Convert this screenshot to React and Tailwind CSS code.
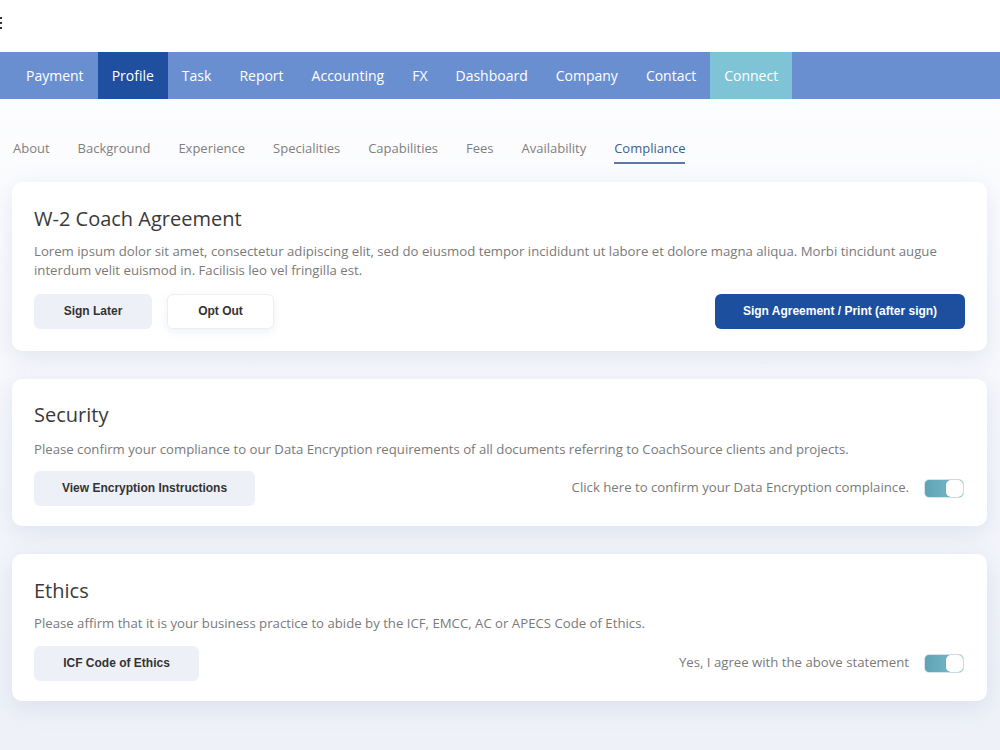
import React, { useState } from 'react';

const navItems = ['Payment', 'Profile', 'Task', 'Report', 'Accounting', 'FX', 'Dashboard', 'Company', 'Contact', 'Connect'];
const tabs = ['About', 'Background', 'Experience', 'Specialities', 'Capabilities', 'Fees', 'Availability', 'Compliance'];

const Toggle = ({ on, onClick }) => (
  <button
    onClick={onClick}
    className={`flex h-[19px] w-[40px] items-center rounded-[5px] border border-[#d9e2ea] p-0 ${on ? 'justify-end bg-gradient-to-r from-[#5fa3b5] to-[#7cc0cf]' : 'justify-start bg-[#e5e7eb]'}`}
  >
    <span className="h-[17px] w-[17px] rounded-[5px] bg-white shadow-[0_0_2px_rgba(0,0,0,0.15)]" />
  </button>
);

const Card = ({ children }) => (
  <div className="rounded-[10px] bg-white px-[22px] shadow-[0_6px_24px_rgba(120,140,190,0.18)]">
    {children}
  </div>
);

const GrayButton = ({ children, className = '' }) => (
  <button className={`h-[35px] rounded-[6px] bg-[#eef0f7] text-[12px] font-bold text-[#333] ${className}`} style={{ fontFamily: '"Liberation Sans", Arial, sans-serif' }}>
    {children}
  </button>
);

export default function App() {
  const [activeNav] = useState('Profile');
  const [activeTab, setActiveTab] = useState('Compliance');
  const [security, setSecurity] = useState(true);
  const [ethics, setEthics] = useState(true);

  return (
    <div className="min-h-[750px] w-full bg-gradient-to-b from-white via-[#f7f8fc] to-[#eef1f8]" style={{ fontFamily: '"Open Sans", "Noto Sans", sans-serif' }}>
      {/* kebab dots, clipped at the left edge */}
      <div className="h-[52px] bg-white">
        <div className="flex flex-col gap-[3px] pt-[17px]">
          <span className="h-[2px] w-[2px] bg-[#333]" />
          <span className="h-[2px] w-[2px] bg-[#333]" />
          <span className="h-[2px] w-[2px] bg-[#333]" />
        </div>
      </div>

      <nav className="flex h-[47px] bg-[#6a8fd1] pl-[12px]">
        {navItems.map((item) => (
          <div
            key={item}
            className={`flex items-center px-[14px] text-[14px] text-white ${
              item === activeNav ? 'bg-[#1f4f9f]' : item === 'Connect' ? 'bg-[#7fc4d6]' : ''
            }`}
          >
            {item}
          </div>
        ))}
      </nav>

      <div className="flex gap-[28px] px-[13px] pt-[40px]">
        {tabs.map((tab) => (
          <button
            key={tab}
            onClick={() => setActiveTab(tab)}
            className={`border-b-2 pb-[3px] text-[13px] ${
              tab === activeTab ? 'border-[#5b79a6] text-[#3d5f93]' : 'border-transparent text-[#808080]'
            }`}
          >
            {tab}
          </button>
        ))}
      </div>

      <div className="flex flex-col gap-[28px] pl-[12px] pr-[13px] pt-[18px] pb-[47px]">
        <Card>
          <div className="pt-[24px] pb-[22px]">
            <h2 className="text-[20px] leading-[26px] text-[#3a3a3a]">W-2 Coach Agreement</h2>
            <p className="mt-[10px] text-[13.2px] leading-[19px] text-[#7a7a7a]">
              Lorem ipsum dolor sit amet, consectetur adipiscing elit, sed do eiusmod tempor incididunt ut labore et dolore magna aliqua. Morbi tincidunt augue interdum velit euismod in. Facilisis leo vel fringilla est.
            </p>
            <div className="mt-[14px] flex items-center">
              <GrayButton className="w-[118px]">Sign Later</GrayButton>
              <button
                className="ml-[15px] h-[35px] w-[107px] rounded-[6px] border border-[#eceef3] bg-white text-[12px] font-bold text-[#333] shadow-[0_3px_8px_rgba(120,140,190,0.12)]"
                style={{ fontFamily: '"Liberation Sans", Arial, sans-serif' }}
              >
                Opt Out
              </button>
              <button
                className="ml-auto h-[35px] w-[250px] rounded-[6px] bg-[#1d4f9f] text-[12px] font-bold text-white"
                style={{ fontFamily: '"Liberation Sans", Arial, sans-serif' }}
              >
                Sign Agreement / Print (after sign)
              </button>
            </div>
          </div>
        </Card>

        <Card>
          <div className="pt-[23px] pb-[20px]">
            <h2 className="text-[20px] leading-[26px] text-[#3a3a3a]">Security</h2>
            <p className="mt-[12px] text-[13.2px] leading-[19px] text-[#7a7a7a]">
              Please confirm your compliance to our Data Encryption requirements of all documents referring to CoachSource clients and projects.
            </p>
            <div className="mt-[12px] flex items-center">
              <GrayButton className="w-[221px]">View Encryption Instructions</GrayButton>
              <span className="ml-auto text-[13.2px] text-[#7a7a7a]">Click here to confirm your Data Encryption complaince.</span>
              <div className="ml-[15px] mr-[1px]">
                <Toggle on={security} onClick={() => setSecurity(!security)} />
              </div>
            </div>
          </div>
        </Card>

        <Card>
          <div className="pt-[24px] pb-[20px]">
            <h2 className="text-[20px] leading-[26px] text-[#3a3a3a]">Ethics</h2>
            <p className="mt-[10px] text-[13.2px] leading-[19px] text-[#7a7a7a]">
              Please affirm that it is your business practice to abide by the ICF, EMCC, AC or APECS Code of Ethics.
            </p>
            <div className="mt-[13px] flex items-center">
              <GrayButton className="w-[165px]">ICF Code of Ethics</GrayButton>
              <span className="ml-auto text-[13.2px] text-[#7a7a7a]">Yes, I agree with the above statement</span>
              <div className="ml-[15px] mr-[1px]">
                <Toggle on={ethics} onClick={() => setEthics(!ethics)} />
              </div>
            </div>
          </div>
        </Card>
      </div>
    </div>
  );
}
